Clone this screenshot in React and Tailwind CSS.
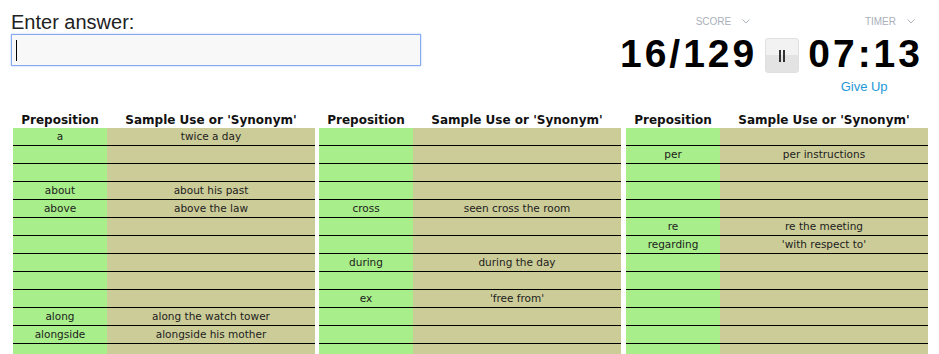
import React from 'react';

const tables = [
  [
    ['a', 'twice a day'],
    [],
    [],
    ['about', 'about his past'],
    ['above', 'above the law'],
    [],
    [],
    [],
    [],
    [],
    ['along', 'along the watch tower'],
    ['alongside', 'alongside his mother'],
    [],
  ],
  [
    [],
    [],
    [],
    [],
    ['cross', 'seen cross the room'],
    [],
    [],
    ['during', 'during the day'],
    [],
    ['ex', "'free from'"],
    [],
    [],
    [],
  ],
  [
    [],
    ['per', 'per instructions'],
    [],
    [],
    [],
    ['re', 're the meeting'],
    ['regarding', "'with respect to'"],
    [],
    [],
    [],
    [],
    [],
    [],
  ],
];

const Chevron = () => (
  <svg width="8" height="5" viewBox="0 0 8 5" className="ml-[11px]">
    <polyline points="0.5,0.5 4,4 7.5,0.5" fill="none" stroke="#aeb4bd" strokeWidth="1" />
  </svg>
);

const QuizTable = ({ rows, className = '' }) => (
  <div className={`w-[302px] shrink-0 ${className}`}>
    <div className="flex h-[17px] items-center text-[12px] font-bold text-[#111]">
      <div className="w-[94px] text-center">Preposition</div>
      <div className="w-[208px] text-center">Sample Use or 'Synonym'</div>
    </div>
    {rows.map((row, i) => (
      <div key={i} className="flex h-[18px] border-b border-black text-[10.5px] text-[#1c1c1c]">
        <div className="flex w-[94px] items-center justify-center bg-[#a8ee8a] pt-px">{row[0] || ''}</div>
        <div className="flex w-[208px] items-center justify-center bg-[#cccc99] pt-px">{row[1] || ''}</div>
      </div>
    ))}
  </div>
);

export default function App() {
  return (
    <div className="h-[354px] overflow-hidden bg-white font-['Liberation_Sans',Arial,sans-serif]">
      <div className="flex h-[95px] justify-between">
        <div className="pl-[11px] pt-[10px]">
          <div className="h-[24px] text-[20px] leading-[24px] text-[#222]">Enter answer:</div>
          <div className="relative h-[32px] w-[410px] border border-[#86aaf0] bg-[#f8f8f8] shadow-[0_0_2px_rgba(100,150,240,0.5)]">
            <div className="absolute left-[4px] top-[5px] h-[21px] w-px bg-black"></div>
          </div>
        </div>

        <div className="flex pr-[16px] pt-[15px]">
          <div className="flex flex-col items-end">
            <div className="flex h-[12px] items-center pr-[7px] text-[10px] text-[#a9b0ba]">
              SCORE
              <Chevron />
            </div>
            <div className="mt-[7px] h-[39px] text-[39px] font-bold leading-[39px] tracking-[3px] text-black">16/129</div>
          </div>

          <div className="ml-[8px] mt-[23px] flex h-[35px] w-[34px] items-center justify-center gap-[2px] rounded-[3px] border border-[#e0e0e0] bg-[linear-gradient(#f2f2f2_50%,#e3e3e3_50%)]">
            <div className="h-[12px] w-[2px] bg-[#333]"></div>
            <div className="h-[12px] w-[2px] bg-[#333]"></div>
          </div>

          <div className="ml-[9px] flex flex-col items-end">
            <div className="flex h-[12px] items-center pr-[8px] text-[10px] text-[#a9b0ba]">
              TIMER
              <Chevron />
            </div>
            <div className="mt-[7px] h-[39px] text-[39px] font-bold leading-[39px] tracking-[3px] text-black">07:13</div>
            <div className="mt-[6px] h-[16px] self-center pr-[3px] text-[13px] leading-[16px] text-[#1f98d6]">Give Up</div>
          </div>
        </div>
      </div>

      <div className="mt-[16px] flex pl-[13px] font-['DejaVu_Sans',Verdana,sans-serif]">
        <QuizTable rows={tables[0]} />
        <QuizTable rows={tables[1]} className="ml-[4px]" />
        <QuizTable rows={tables[2]} className="ml-[5px]" />
      </div>
    </div>
  );
}
